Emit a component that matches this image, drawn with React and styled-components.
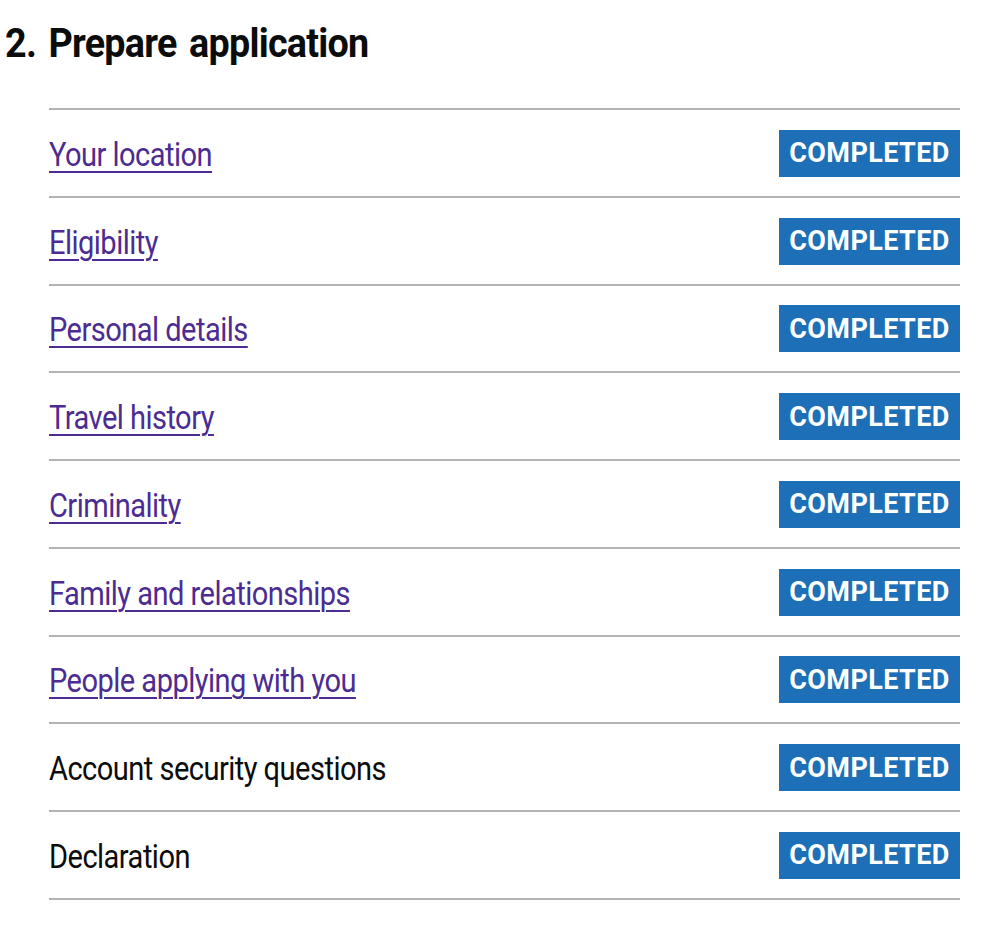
import React from 'react'
import styled, { createGlobalStyle } from 'styled-components'

const GlobalStyle = createGlobalStyle`
  body {
    margin: 0;
    background: #fff;
    font-family: Roboto, "Liberation Sans", sans-serif;
    color: #0b0c0c;
  }
`

const Page = styled.div`
  width: 989px;
  padding: 18px 29px 0 5px;
  box-sizing: border-box;
`

const Heading = styled.h2`
  margin: 0 0 40px;
  font-size: 41px;
  line-height: 50px;
  font-weight: 700;
  letter-spacing: -0.8px;
  word-spacing: 4px;
  transform: scaleX(0.92);
  transform-origin: left center;
`

const TaskList = styled.ul`
  list-style: none;
  margin: 0 0 0 44px;
  padding: 0;
  border-top: 2px solid #b1b4b6;
`

const TaskRow = styled.li`
  display: flex;
  align-items: center;
  justify-content: space-between;
  box-sizing: border-box;
  height: 87.75px;
  padding-top: 1px;
  border-bottom: 2px solid #b1b4b6;
`

// the reference face is a narrow one, so squeeze Roboto a little
const TaskName = styled.a`
  display: inline-block;
  padding-top: 2px;
  font-size: 33px;
  letter-spacing: -0.6px;
  transform: scaleX(0.88);
  transform-origin: left center;
  color: ${p => (p.href ? '#4c2c92' : '#0b0c0c')};
  text-decoration: ${p => (p.href ? 'underline' : 'none')};
  text-decoration-thickness: 2px;
  text-underline-offset: 5px;
`

const Tag = styled.strong`
  display: flex;
  align-items: center;
  justify-content: center;
  width: 181px;
  height: 47px;
  background: #1d70b8;
  color: #fff;
  font-size: 27px;
  font-weight: 700;
  letter-spacing: 0.4px;
  text-transform: uppercase;
`

const tasks = [
  { name: 'Your location', link: true },
  { name: 'Eligibility', link: true },
  { name: 'Personal details', link: true },
  { name: 'Travel history', link: true },
  { name: 'Criminality', link: true },
  { name: 'Family and relationships', link: true },
  { name: 'People applying with you', link: true },
  { name: 'Account security questions', link: false },
  { name: 'Declaration', link: false },
]

const App = () => {
  return (
    <Page>
      <GlobalStyle />
      <Heading>2. Prepare application</Heading>
      <TaskList>
        {tasks.map(t => (
          <TaskRow key={t.name}>
            <TaskName as={t.link ? 'a' : 'span'} href={t.link ? '#' : undefined}>
              {t.name}
            </TaskName>
            <Tag>Completed</Tag>
          </TaskRow>
        ))}
      </TaskList>
    </Page>
  )
}

export default App
